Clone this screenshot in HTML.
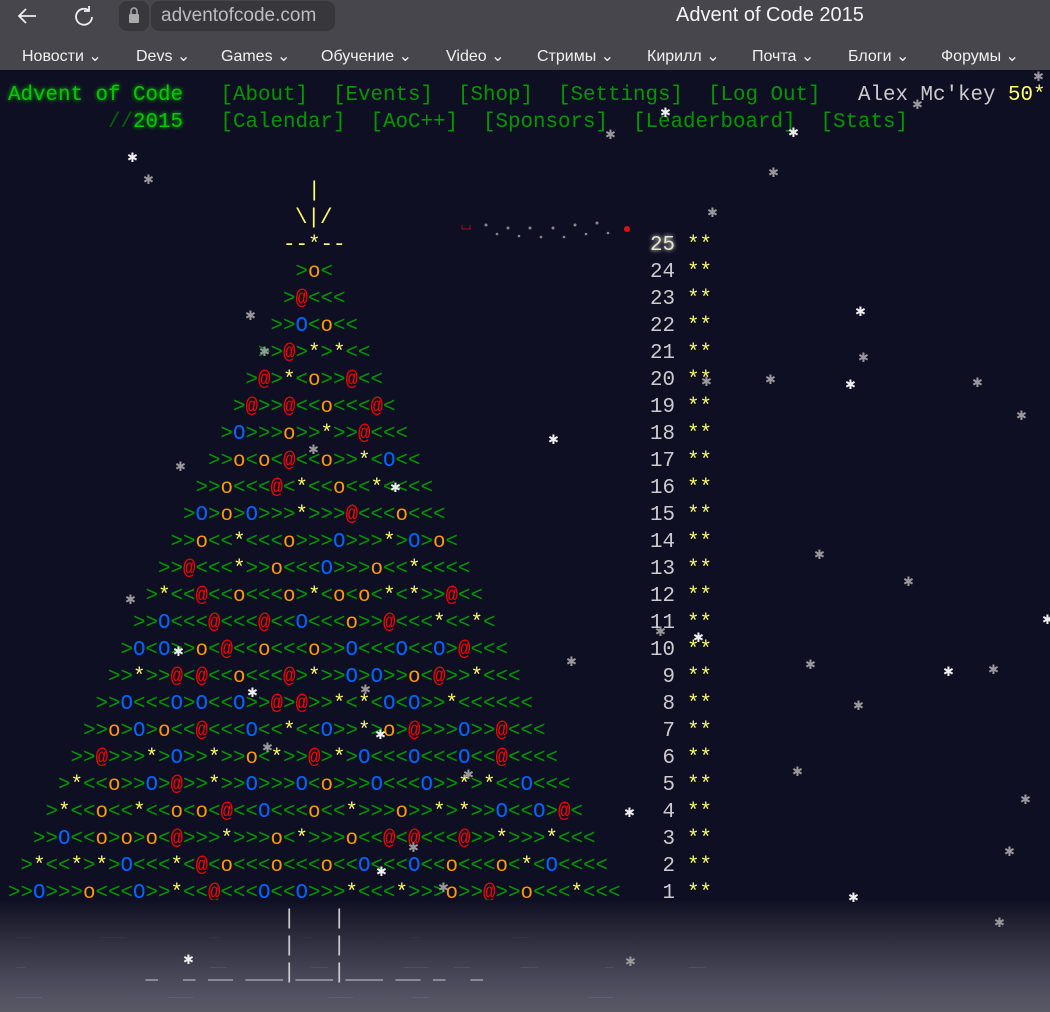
<!DOCTYPE html>
<html><head><meta charset="utf-8">
<style>
html,body{margin:0;padding:0;}
body{width:1050px;height:1012px;overflow:hidden;background:#0f0f23;position:relative;font-family:"Liberation Mono",monospace;}
#chrome{position:absolute;left:0;top:0;width:1050px;height:70px;background:#47464c;font-family:"Liberation Sans","Noto Sans CJK SC",sans-serif;color:#f2f2f2;}
#url{position:absolute;left:151px;top:1px;width:184px;height:30px;background:#38373c;border-radius:8px;color:#bdbdc0;font-size:19px;line-height:30px;padding-left:10px;box-sizing:border-box;}
#lock{position:absolute;left:119px;top:1px;width:30px;height:30px;background:#38373c;border-radius:8px;}
#title{position:absolute;left:676px;top:4px;font-size:20px;color:#f4f4f4;}
.bm{position:absolute;top:46px;font-size:16px;color:#f0f0f0;}
.m{position:absolute;font-size:20.83px;line-height:27px;white-space:pre;}
.g{color:#009900}.o{color:#ff9900}.r{color:#ff0000}.b{color:#0066ff}.s{color:#ffff66}
.num{color:#cccccc}
.sn{position:absolute;color:#bbbbbb;font-family:"DejaVu Sans",sans-serif;font-size:13px;line-height:13px;}
#bottom{position:absolute;left:0;top:900px;width:1050px;height:112px;background:linear-gradient(#0f0f23,#2a2a3a 30%,#48485a 70%,#5a5a66);}
</style></head><body>
<div id="chrome">
<svg style="position:absolute;left:16px;top:6px" width="22" height="20" viewBox="0 0 22 20"><path d="M20 10H3M10 3L3 10l7 7" stroke="#eee" stroke-width="1.8" fill="none"/></svg>
<svg style="position:absolute;left:72px;top:4px" width="24" height="24" viewBox="0 0 24 24"><path d="M17 6.5A8 8 0 1 0 20 13" stroke="#eee" stroke-width="1.8" fill="none"/><path d="M17 2v5h-5" stroke="#eee" stroke-width="1.8" fill="none"/></svg>
<div id="lock"><svg width="30" height="30" viewBox="0 0 30 30"><rect x="10" y="13" width="10" height="9" rx="1" fill="#aaa"/><path d="M12 13v-3a3 3 0 0 1 6 0v3" stroke="#aaa" stroke-width="1.6" fill="none"/></svg></div>
<div id="url">adventofcode.com</div>
<div id="title">Advent of Code 2015</div>
<div class="bm" style="left:22px">Новости ⌄</div>
<div class="bm" style="left:136px">Devs ⌄</div>
<div class="bm" style="left:221px">Games ⌄</div>
<div class="bm" style="left:321px">Обучение ⌄</div>
<div class="bm" style="left:446px">Video ⌄</div>
<div class="bm" style="left:537px">Стримы ⌄</div>
<div class="bm" style="left:647px">Кирилл ⌄</div>
<div class="bm" style="left:752px">Почта ⌄</div>
<div class="bm" style="left:848px">Блоги ⌄</div>
<div class="bm" style="left:941px">Форумы ⌄</div>
</div>

<div class="m" style="left:8px;top:82px"><span style="color:#00cc00;text-shadow:0 0 4px #00cc00">Advent of Code</span><span class="g">   [About]  [Events]  [Shop]  [Settings]  [Log Out]</span>   <span style="color:#cccccc">Alex Mc'key</span> <span class="s">50*</span></div>
<div class="m" style="left:8px;top:109px">        <span style="color:#006600">//</span><span style="color:#00cc00;text-shadow:0 0 4px #00cc00">2015</span><span class="g">   [Calendar]  [AoC++]  [Sponsors]  [Leaderboard]  [Stats]</span></div>

<div class="m s" style="left:308px;top:178px">|</div>
<div class="m s" style="left:295px;top:205px">\|/</div>
<div class="m s" style="left:283px;top:232px">--*--</div>

<div id="tree"></div>

<div id="bottom"></div>
<div class="m" style="left:8px;top:906px;color:#cccccc">                      |   |</div>
<div class="m" style="left:8px;top:933px;color:#cccccc">                      |   |</div>
<div class="m" style="left:8px;top:960px;color:#cccccc">           _  _ __ ___|___|___ __ _  _</div>
<div class="m" style="left:0;top:920px;color:#3a3a4e;font-size:14px">  __        ___          _          _            _           __</div>
<div class="m" style="left:0;top:950px;color:#55556a;font-size:14px">  _                      __          __         ___   __      __        _         __</div>
<div class="m" style="left:0;top:980px;color:#66667a;font-size:14px">  ___               ___                ___       __                   ___</div>

<svg style="position:absolute;left:460px;top:220px" width="175" height="20">
<path d="M2 5v4h8v-4" stroke="#a01010" fill="none"/>
<g fill="#888"><circle cx="26" cy="5" r="1.5"/><circle cx="37" cy="14" r="1.3"/><circle cx="48" cy="8" r="1.5"/><circle cx="59" cy="16" r="1.3"/><circle cx="70" cy="8" r="1.5"/><circle cx="81" cy="17" r="1.3"/><circle cx="93" cy="8" r="1.5"/><circle cx="104" cy="17" r="1.3"/><circle cx="115" cy="5" r="1.5"/><circle cx="126" cy="14" r="1.3"/><circle cx="137" cy="3" r="1.5"/><circle cx="148" cy="13" r="1.3"/></g>
<circle cx="167" cy="9" r="3" fill="#e01010"/></svg>

<div id="snow"></div>
<script>
(function(){
var rows={24:">o<",23:">@<<<",22:">>O<o<<",21:">>@>*>*<<",20:">@>*<o>>@<<",19:">@>>@<<o<<<@<",18:">O>>>o>>*>>@<<<",17:">>o<o<@<<o>>*<O<<",16:">>o<<<@<*<<o<<*<<<<",15:">O>o>O>>>*>>>@<<<o<<<",14:">>o<<*<<<o>>>O>>>*>O>o<",13:">>@<<<*>>o<<<O>>>o<<*<<<<",12:">*<<@<<o<<<o>*<o<o<*<*>>@<<",11:">>O<<<@<<<@<<O<<<o>>@<<<*<<*<",10:">O<O>>o<@<<o<<<o>>O<<<O<<O>@<<<",9:">>*>>@<@<<o<<<@>*>>O>O>>o<@>>*<<<",8:">>O<<<O>O<<O>>@>@>>*<*<O<O>>*<<<<<<",7:">>o>O>o<<@<<<O<<*<<O>>*>o>@>>>O>>@<<<",6:">>@>>>*>O>>*>>o<*>>@>*>O<<<O<<<O<<@<<<<",5:">*<<o>>O>@>>*>>O>>>O<o>>>O<<<O>>*>*<<O<<<",4:">*<<o<<*<<o<o<@<<O<<<o<<*>>>o>>*>*>>O<<O>@<",3:">>O<<o>o>o<@>>>*>>>o<*>>>o<<@<@<<<@>>*>>>*<<<",2:">*<<*>*>O<<<*<@<o<<<o<<<o<<O<<<O<<o<<<o<*<O<<<<",1:">>O>>>o<<<O>>*<<@<<<O<<O>>>*<<<*>>>o>>@>>o<<<*<<<"};
var cls={'o':'o','@':'r','O':'b','*':'s'};
var h='';
for(var k=24;k>=1;k--){var t=rows[k],s='';for(var i=0;i<t.length;i++){var c=t[i];var cc=cls[c]||'g';s+='<span class="'+cc+'">'+(c=='<'?'&lt;':c=='>'?'&gt;':c)+'</span>';}
var ty=232+(25-k)*27;h+='<div class="m" style="left:'+(8+(k-1)*12.5)+'px;top:'+ty+'px">'+s+'</div>';}
for(var k=25;k>=1;k--){var ty=232+(25-k)*27;h+='<div class="m num" style="left:'+(k>=10?650:662.5)+'px;top:'+ty+'px'+(k==25?';color:#e6e6c0;text-shadow:0 0 4px #fff':'')+'">'+k+'</div><div class="m s" style="left:687px;top:'+ty+'px">**</div>';}
document.getElementById('tree').innerHTML=h;
var sn=[[132,158],[148,180],[610,135],[793,133],[773,173],[712,213],[665,113],[250,316],[264,352],[860,312],[863,358],[770,380],[850,385],[977,383],[1021,416],[553,440],[180,467],[313,450],[395,488],[819,555],[908,582],[1047,620],[130,600],[660,632],[698,638],[571,662],[810,665],[948,672],[993,670],[858,706],[252,693],[365,690],[267,748],[380,735],[797,772],[468,775],[629,813],[1025,800],[413,848],[381,872],[443,888],[1009,852],[853,898],[999,923],[706,382],[178,652],[1038,77],[917,105],[188,960],[630,962]];
var q='';sn.forEach(function(p,i){q+='<div class="sn" style="left:'+(p[0]-5)+'px;top:'+(p[1]-6)+'px;color:'+(i%3==0?'#eeeeee':'#999999')+'">✱</div>';});
document.getElementById('snow').innerHTML=q;
})();
</script>
</body></html>
